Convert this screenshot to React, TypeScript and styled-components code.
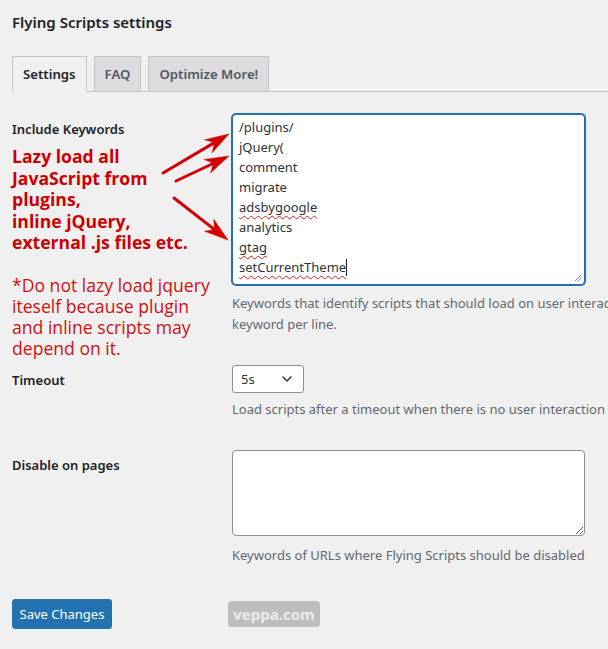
import React from "react";
import styled, { createGlobalStyle } from "styled-components";
import { ChevronDown } from "lucide-react";

const GlobalStyle = createGlobalStyle`
  html, body {
    margin: 0;
    padding: 0;
    background: #f0f0f1;
    overflow: hidden;
  }
  body {
    font-family: "Noto Sans", "Open Sans", sans-serif;
    color: #1d2327;
  }
`;

type Arrow = { x1: number; y1: number; x2: number; y2: number };

const arrows: Arrow[] = [
  { x1: 163, y1: 173, x2: 229, y2: 134 },
  { x1: 176, y1: 181, x2: 229, y2: 156 },
  { x1: 174, y1: 198, x2: 228, y2: 240 },
];

// long barbed head, like the one in the reference annotation
function arrowShape({ x1, y1, x2, y2 }: Arrow) {
  const dx = x2 - x1;
  const dy = y2 - y1;
  const len = Math.hypot(dx, dy);
  const ux = dx / len;
  const uy = dy / len;
  const px = -uy;
  const py = ux;
  const headLen = 24;
  const half = 7.5;
  const notch = 17;
  const bx = x2 - ux * headLen;
  const by = y2 - uy * headLen;
  const nx = x2 - ux * notch;
  const ny = y2 - uy * notch;
  const head = [
    [x2, y2],
    [bx + px * half, by + py * half],
    [nx, ny],
    [bx - px * half, by - py * half],
  ]
    .map((p) => p.map((v) => v.toFixed(1)).join(","))
    .join(" ");
  return { head, lx: nx, ly: ny };
}

const keywords = [
  { text: "/plugins/" },
  { text: "jQuery(" },
  { text: "comment" },
  { text: "migrate" },
  { text: "adsbygoogle", typo: true },
  { text: "analytics" },
  { text: "gtag", typo: true },
  { text: "setCurrentTheme", typo: true, caret: true },
];

export default function App() {
  return (
    <Page>
      <GlobalStyle />
      <Title>Flying Scripts settings</Title>
      <TabBar>
        <Tab $active>Settings</Tab>
        <Tab>FAQ</Tab>
        <Tab>Optimize More!</Tab>
      </TabBar>

      <FormTable>
        <Label>Include Keywords</Label>
        <Field>
          <KeywordBox>
            {keywords.map((k) => (
              <KeywordLine key={k.text}>
                <Word $typo={k.typo}>{k.text}</Word>
                {k.caret && <Caret />}
              </KeywordLine>
            ))}
            <Grip viewBox="0 0 10 10">
              <path d="M9 3 L3 9 M9 6 L6 9" stroke="#8c8f94" strokeWidth="1" />
            </Grip>
          </KeywordBox>
          <Description $gap={8}>
            Keywords that identify scripts that should load on user interaction. One
            keyword per line.
          </Description>
        </Field>

        <Label>Timeout</Label>
        <Field>
          <SelectBox>
            <span>5s</span>
            <ChevronDown size={16} strokeWidth={2.2} color="#2c3338" />
          </SelectBox>
          <Description $gap={6}>
            Load scripts after a timeout when there is no user interaction
          </Description>
        </Field>

        <Label>Disable on pages</Label>
        <Field>
          <PagesBox defaultValue="" />
          <Description $gap={9}>
            Keywords of URLs where Flying Scripts should be disabled
          </Description>
        </Field>
      </FormTable>

      <SubmitRow>
        <SaveButton type="button">Save Changes</SaveButton>
        <Watermark>veppa.com</Watermark>
      </SubmitRow>

      <Note>
        <NoteBold>
          Lazy load all
          <br />
          JavaScript from
          <br />
          plugins,
          <br />
          inline jQuery,
          <br />
          external .js files etc.
        </NoteBold>
        <NoteText>
          *Do not lazy load jquery
          <br />
          iteself because plugin
          <br />
          and inline scripts may
          <br />
          depend on it.
        </NoteText>
      </Note>

      <ArrowLayer width="608" height="649" viewBox="0 0 608 649">
        {arrows.map((a, i) => {
          const s = arrowShape(a);
          return (
            <g key={i} fill="#d40000" stroke="#d40000">
              <line
                x1={a.x1}
                y1={a.y1}
                x2={s.lx}
                y2={s.ly}
                strokeWidth="3"
                strokeLinecap="round"
              />
              <polygon points={s.head} strokeWidth="0.5" strokeLinejoin="round" />
            </g>
          );
        })}
      </ArrowLayer>
    </Page>
  );
}

const Page = styled.div`
  position: relative;
  width: 700px;
  min-height: 649px;
  padding: 9px 0 0 12px;
  box-sizing: border-box;
`;

const Title = styled.h1`
  margin: 0;
  font-size: 15px;
  line-height: 26px;
  font-weight: 600;
  color: #1d2327;
`;

const TabBar = styled.nav`
  display: flex;
  gap: 7px;
  margin-top: 21px;
  border-bottom: 1px solid #c3c4c7;
  height: 35px;
  align-items: flex-end;
`;

const Tab = styled.div<{ $active?: boolean }>`
  display: flex;
  align-items: center;
  height: 36px;
  box-sizing: border-box;
  padding: 0 10px;
  margin-bottom: -1px;
  border: 1px solid #c3c4c7;
  border-bottom-color: ${(p) => (p.$active ? "#f0f0f1" : "#c3c4c7")};
  background: ${(p) => (p.$active ? "#f0f0f1" : "#dcdcde")};
  color: ${(p) => (p.$active ? "#1d2327" : "#50575e")};
  font-size: 13.2px;
  font-weight: 600;
`;

const FormTable = styled.div`
  display: grid;
  grid-template-columns: 220px 440px;
  margin-top: 7px;
`;

const Label = styled.div`
  padding: 21px 0 0 0;
  font-size: 13px;
  line-height: 18px;
  font-weight: 600;
  color: #1d2327;
`;

const Field = styled.div`
  padding: 15px 0;
`;

const KeywordBox = styled.div`
  position: relative;
  width: 353px;
  height: 171px;
  box-sizing: border-box;
  padding: 2px 6px;
  background: #fff;
  border: 1px solid #2271b1;
  box-shadow: 0 0 0 1px #2271b1;
  border-radius: 4px;
  font-size: 13px;
  line-height: 20px;
  color: #2c3338;
`;

const KeywordLine = styled.div`
  display: flex;
  align-items: center;
  height: 20px;
`;

const Word = styled.span<{ $typo?: boolean }>`
  text-decoration: ${(p) => (p.$typo ? "underline wavy #e01b1b" : "none")};
  text-decoration-thickness: 1px;
  text-underline-offset: 3px;
`;

const Caret = styled.span`
  display: inline-block;
  width: 1px;
  height: 17px;
  background: #1d2327;
`;

const Grip = styled.svg`
  position: absolute;
  right: 2px;
  bottom: 2px;
  width: 10px;
  height: 10px;
`;

const Description = styled.p<{ $gap: number }>`
  margin: ${(p) => p.$gap}px 0 0;
  font-size: 13px;
  line-height: 21px;
  color: #646970;
`;

const SelectBox = styled.div`
  display: flex;
  align-items: center;
  justify-content: space-between;
  width: 72px;
  height: 28px;
  box-sizing: border-box;
  padding: 0 8px 0 8px;
  background: #fff;
  border: 1px solid #8c8f94;
  border-radius: 3px;
  font-size: 13px;
  color: #2c3338;
`;

const PagesBox = styled.textarea`
  display: block;
  width: 353px;
  height: 86px;
  box-sizing: border-box;
  margin: 0;
  padding: 2px 6px;
  background: #fff;
  border: 1px solid #8c8f94;
  border-radius: 4px;
  font-family: inherit;
  font-size: 13px;
  resize: vertical;
  outline: none;
`;

const SubmitRow = styled.div`
  display: flex;
  align-items: center;
  margin-top: 18px;
`;

const SaveButton = styled.button`
  width: 100px;
  height: 30px;
  padding: 0;
  white-space: nowrap;
  border: 1px solid #2271b1;
  border-radius: 3px;
  background: #2271b1;
  color: #fff;
  font-family: inherit;
  font-size: 13px;
  cursor: pointer;
`;

const Watermark = styled.div`
  margin-left: 116px;
  width: 92px;
  height: 26px;
  border-radius: 4px;
  background: #bdbdbf;
  color: #ececec;
  display: flex;
  align-items: center;
  justify-content: center;
  font-family: "Open Sans", "Noto Sans", sans-serif;
  font-weight: 700;
  font-size: 15px;
`;

const Note = styled.div`
  position: absolute;
  left: 12px;
  top: 146px;
  color: #cc0000;
  font-family: "Open Sans", "Noto Sans", sans-serif;
  font-size: 17.6px;
`;

const NoteBold = styled.div`
  font-weight: 700;
  line-height: 21.5px;
`;

const NoteText = styled.div`
  margin-top: 21px;
  line-height: 21.3px;
  color: #d01010;
`;

const ArrowLayer = styled.svg`
  position: absolute;
  left: 0;
  top: 0;
  pointer-events: none;
`;
